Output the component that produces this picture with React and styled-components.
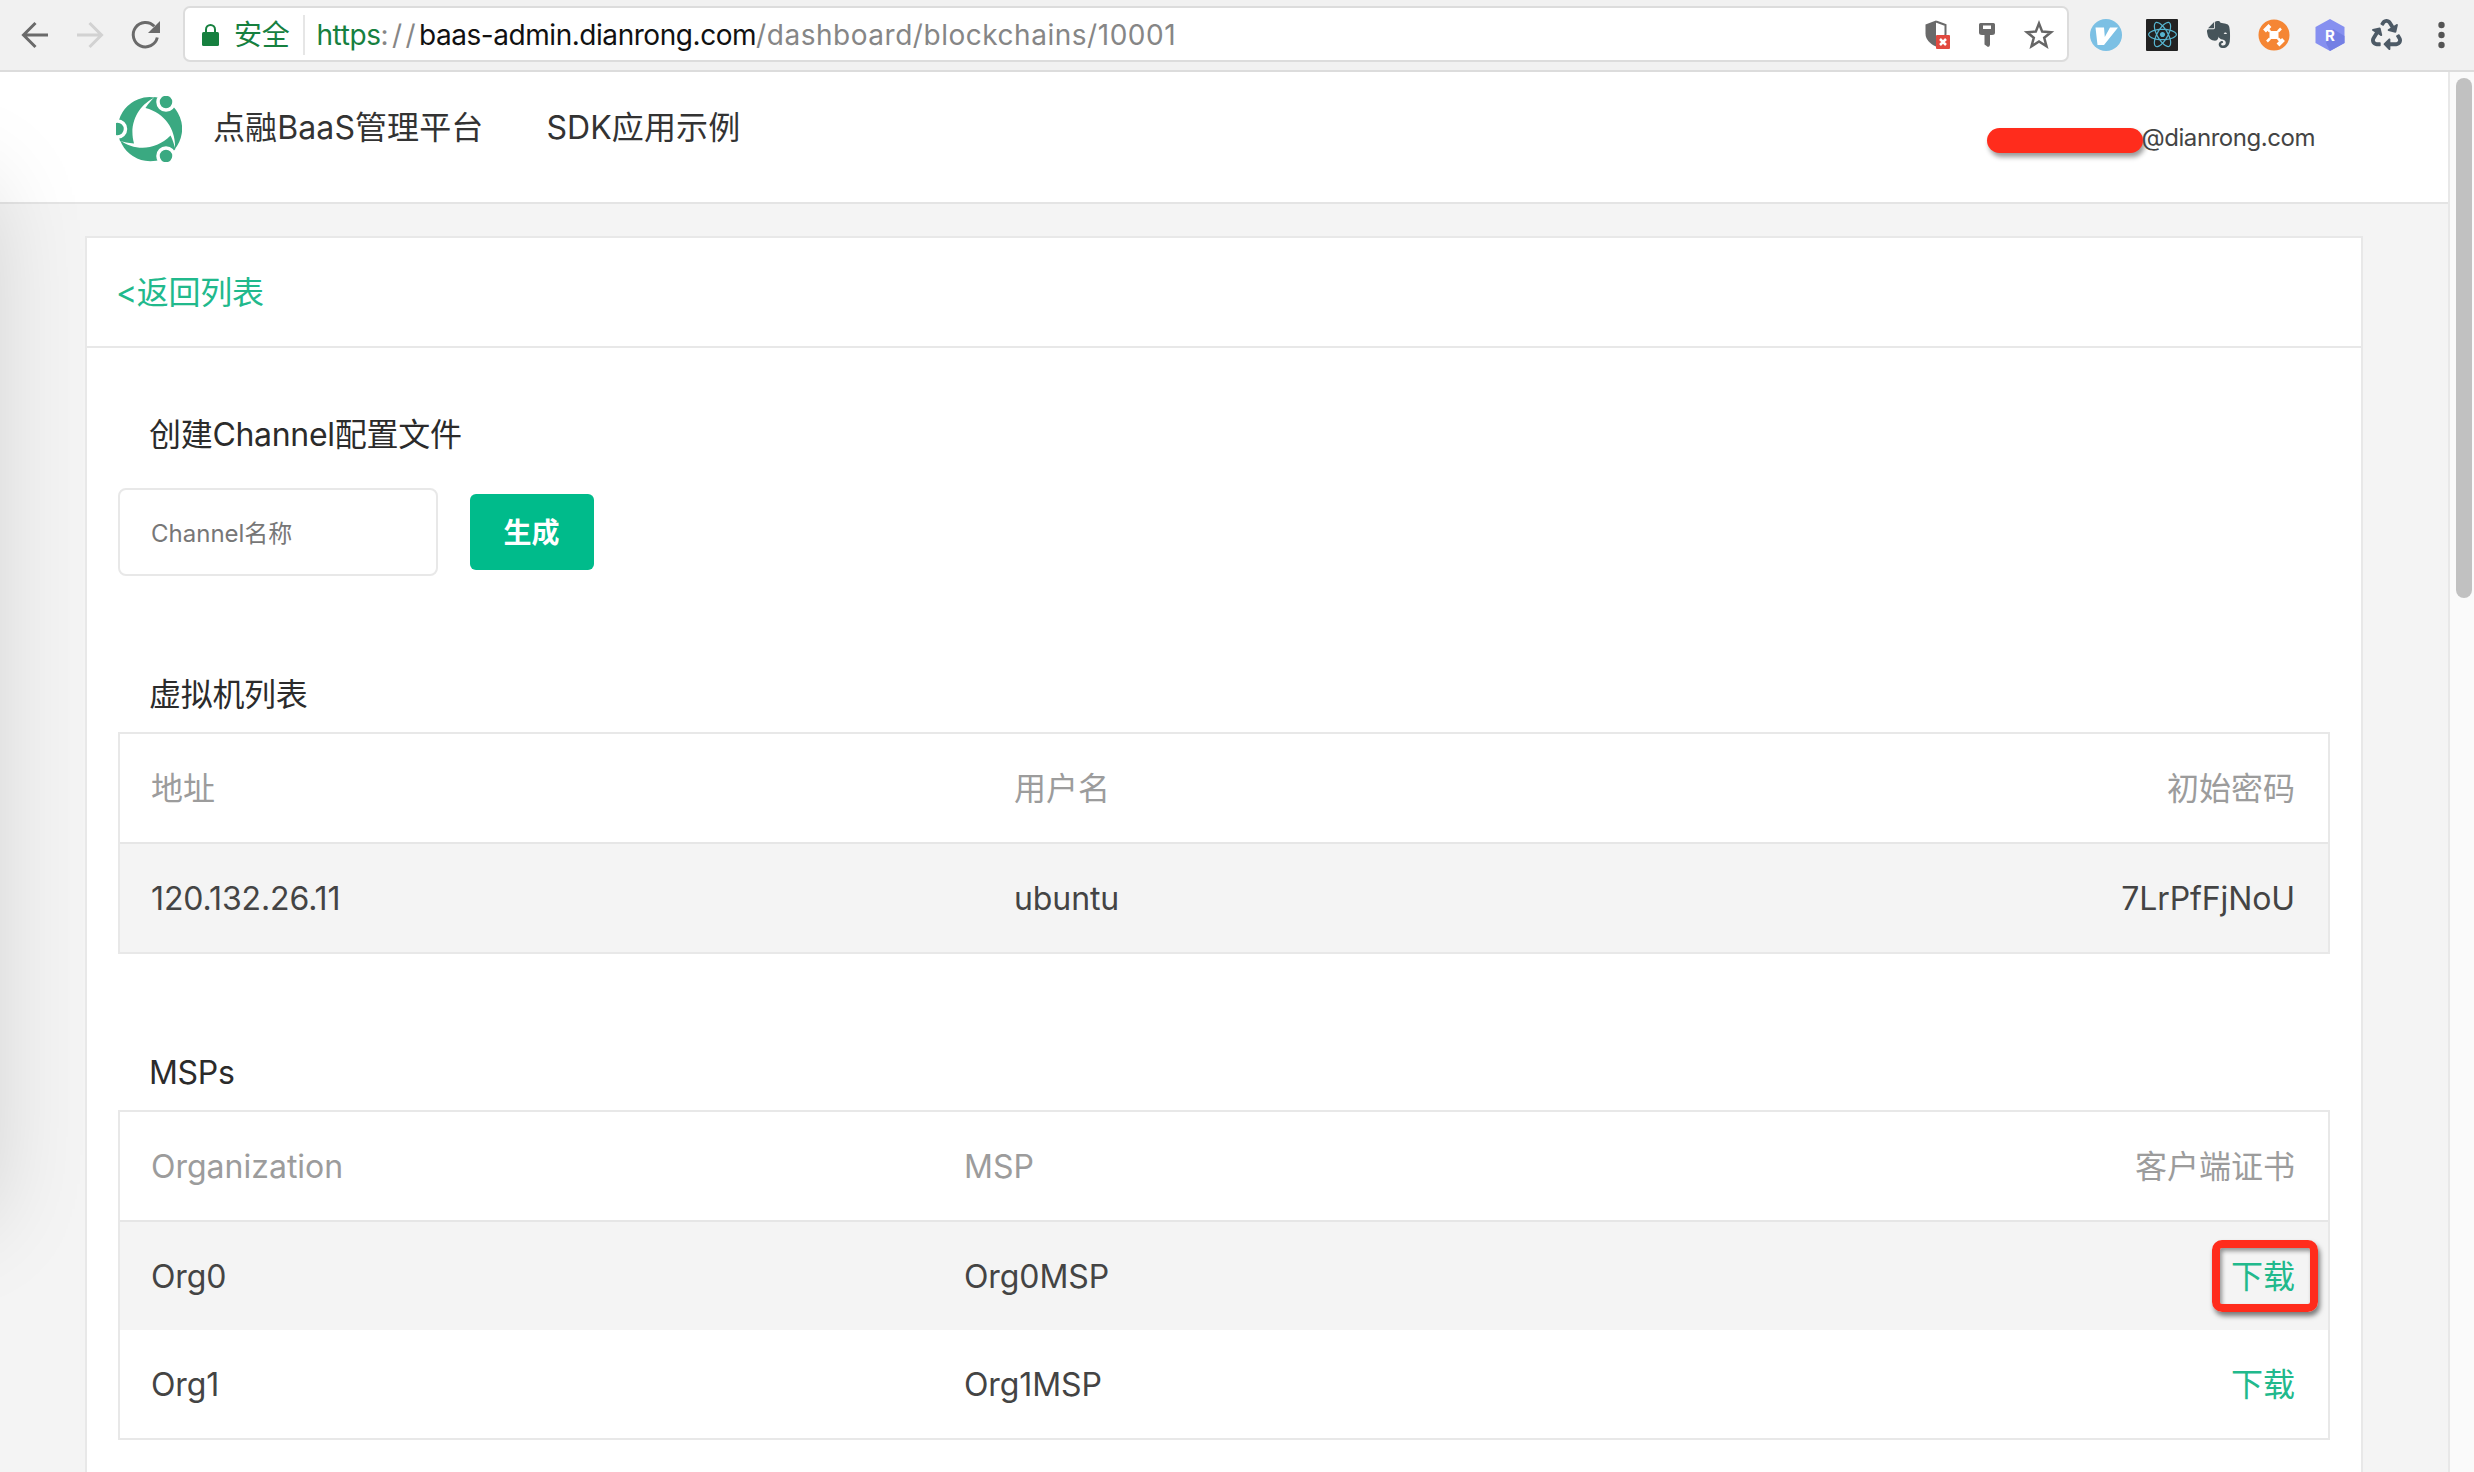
import React from "react";
import styled, { createGlobalStyle, css } from "styled-components";
import { FaEvernote, FaReact, FaRecycle } from "react-icons/fa";

const GREEN = "#00bb8b";
const LINK = "#21b98c";
const LINE = "#e8e8e8";
const RED = "#ff2c1c";

const GlobalStyle = createGlobalStyle`
  *, *::before, *::after { box-sizing: border-box; }
  body { margin: 0; background: #f4f4f4; }
  body, input, button {
    font-family: Inter, "Noto Sans CJK SC", sans-serif;
  }
`;

const Window = styled.div`
  height: 1472px;
  overflow: hidden;
  display: flex;
  flex-direction: column;
  color: #444;
  font-size: 32px;
  line-height: 40px;
  letter-spacing: -0.1px;
`;

/* ---------- browser toolbar ---------- */

const Toolbar = styled.div`
  flex: none;
  height: 72px;
  padding: 6px 16px 0 20px;
  display: flex;
  background: #f1f1f1;
  border-bottom: 2px solid #dcdcdc;
`;

const NavButtons = styled.div`
  width: 163px;
  height: 57px;
  display: flex;
  align-items: center;
  gap: 25px;
`;

const AddressBar = styled.div`
  width: 1886px;
  height: 56px;
  padding: 1px 12px 0 17px;
  display: flex;
  align-items: center;
  background: #fff;
  border: 2px solid #dcdcdc;
  border-radius: 7px;
  font-size: 28px;
  letter-spacing: 0;
`;

const Secure = styled.span`
  margin-left: 15px;
  padding-right: 14px;
  color: #16803f;
  letter-spacing: -0.3px;
  border-right: 2px solid #e6e6e6;
`;

const Url = styled.div`
  flex: 1;
  padding: 1px 0 0 11px;
  white-space: pre;
`;

const urlColors = { scheme: "#16803f", host: "#111", rest: "#868686" };

const UrlPart = styled.span`
  color: ${(p) => urlColors[p.$kind]};
  letter-spacing: ${(p) => p.$spacing}px;
`;

const PageActions = styled.div`
  display: flex;
  align-items: center;
  gap: 26px;
`;

const Extensions = styled.div`
  height: 57px;
  margin-left: 21px;
  display: flex;
  align-items: center;
  gap: 24px;
`;

const Tile = styled.span`
  width: 32px;
  height: 32px;
  display: flex;
  align-items: center;
  justify-content: center;
  color: ${(p) => p.$color};
  background: ${(p) => p.$bg || "transparent"};
  border-radius: 1px;
`;

/* ---------- page ---------- */

const Viewport = styled.div`
  flex: 1;
  min-height: 0;
  display: flex;
`;

const Page = styled.div`
  flex: 1;
  min-width: 0;
  position: relative;
  overflow: hidden;
`;

const DrawerShadow = styled.div`
  position: absolute;
  top: 115px;
  left: -220px;
  width: 206px;
  height: 1030px;
  box-shadow: 0 0 100px rgba(0, 0, 0, 0.17);
  pointer-events: none;
`;

const ScrollTrack = styled.div`
  width: 26px;
  padding: 6px 2px 0 6px;
  background: #fafafa;
  border-left: 2px solid ${LINE};
`;

const ScrollThumb = styled.div`
  width: 16px;
  height: 520px;
  border-radius: 8px;
  background: #c1c1c1;
`;

const Header = styled.header`
  height: 132px;
  padding: 24px 133px 0 116px;
  display: flex;
  align-items: flex-start;
  background: #fff;
  border-bottom: 2px solid #e4e4e4;
`;

const Nav = styled.nav`
  flex: 1;
  margin: 12px 0 0 31px;
  display: flex;
  gap: 63px;
`;

const NavItem = styled.a`
  color: #333;
  letter-spacing: 0.1px;
`;

const Account = styled.div`
  margin-top: 22px;
  display: flex;
  font-size: 24px;
  letter-spacing: -0.45px;
`;

const Redaction = styled.span`
  width: 156px;
  height: 25px;
  margin: 10px -1px 0 0;
  border-radius: 13px;
  background: ${RED};
  box-shadow: 2px 4px 5px rgba(0, 0, 0, 0.4);
`;

const Card = styled.main`
  position: relative;
  z-index: 1;
  width: 2278px;
  height: 1400px;
  margin: 32px 0 0 85px;
  background: #fff;
  border: 2px solid ${LINE};
`;

const CardHeader = styled.div`
  height: 110px;
  padding: 2px 0 0 29px;
  display: flex;
  align-items: center;
  border-bottom: 2px solid ${LINE};
`;

const CardBody = styled.div`
  padding: 67px 31px 0;
  display: flex;
  flex-direction: column;
  gap: 99px;
`;

const Link = styled.a`
  color: ${LINK};
  position: relative;
  letter-spacing: ${(p) => (p.$tight ? "-0.3px" : "0")};
  ${(p) =>
    p.$marked &&
    css`
      &::after {
        content: "";
        position: absolute;
        inset: -17px -23px -15px -19px;
        border: 8px solid ${RED};
        border-radius: 10px;
        box-shadow: 2px 4px 5px rgba(0, 0, 0, 0.5),
          inset 2px 3px 4px rgba(0, 0, 0, 0.4);
      }
    `}
`;

const Heading = styled.h2`
  margin: 0 0 ${(p) => p.$gap}px;
  padding-left: 31px;
  font-size: 32px;
  line-height: 40px;
  font-weight: 400;
  color: #2b2b2b;
  letter-spacing: -0.3px;
`;

const Form = styled.div`
  display: flex;
  align-items: center;
  gap: 32px;
`;

const TextInput = styled.input`
  width: 320px;
  height: 88px;
  padding: 2px 30px 0 31px;
  border: 2px solid #e8e8e8;
  border-radius: 8px;
  background: #fff;
  font-size: 24px;
  outline: none;
  &::placeholder { color: #777; opacity: 1; }
`;

const Button = styled.button`
  width: 124px;
  height: 76px;
  padding: 0 1px 2px 0;
  border: 0;
  border-radius: 6px;
  background: ${GREEN};
  color: #fff;
  font-size: 28px;
  font-weight: 700;
`;

const Table = styled.div`
  border: 2px solid ${LINE};
`;

const Row = styled.div`
  height: 108px;
  padding: 2px 33px 0 31px;
  display: grid;
  grid-template-columns: ${(p) => p.$first}px 1fr auto;
  align-items: center;
  background: ${(p) => (p.$striped ? "#f4f4f4" : "#fff")};
  ${(p) =>
    p.$head &&
    css`
      height: 110px;
      color: #9c9c9c;
      letter-spacing: 0;
      border-bottom: 2px solid #e6e6e6;
    `}
`;

/* ---------- drawings ---------- */

const Logo = () => (
  <svg width="66" height="66" viewBox="0 0 66 66">
    {[0, 120, 240].map((a) => (
      <g key={a} transform={`rotate(${a} 34 33)`}>
        <path
          fill="#3aa981"
          d="M4 45 A32 32 0 0 1 39 1.5 C24 8 12 26 18 47.5 C12 47 8 46 4 45Z"
        />
      </g>
    ))}
    {[[50, 6], [50, 60], [1.5, 33]].map(([x, y]) => (
      <circle key={y} cx={x} cy={y} r="8" fill="#3aa981" stroke="#fff" strokeWidth="3.5" />
    ))}
  </svg>
);

const Arrow = ({ color, flip }) => (
  <svg width="30" height="30" viewBox="0 0 30 30" fill="none" stroke={color} strokeWidth="3">
    <path transform={flip ? "matrix(-1 0 0 1 30 0)" : undefined} d="M28 15H4M15.500 3 3.500 15l12 12" />
  </svg>
);

const Reload = () => (
  <svg width="32" height="32" viewBox="0 0 32 32">
    <path d="M27.300 18.500A12.200 12.200 0 1 1 24.300 7.300" fill="none" stroke="#6a6a6a" strokeWidth="3" />
    <path d="M30 2v12H18z" fill="#6a6a6a" />
  </svg>
);

const Lock = () => (
  <svg width="17" height="24" viewBox="0 0 17 24">
    <path d="M4 10V6.500a4.500 4.500 0 0 1 9 0V10" fill="none" stroke="#16803f" strokeWidth="2" />
    <rect y="9" width="17" height="14" rx="1.500" fill="#16803f" />
  </svg>
);

const Shield = () => (
  <svg width="27" height="32" viewBox="0 0 27 32">
    <path d="M12 1.500 1.500 5.500v9c0 6 4.500 10.500 10.500 13z" fill="#6a6a6a" />
    <path d="M12 2.500 21.500 6v9c0 5.500-4 9.500-9.500 12" fill="#fff" stroke="#6a6a6a" strokeWidth="2" />
    <rect x="12" y="16" width="14" height="14" rx="1" fill="#e2493f" />
    <path d="m16 20 6 6m0-6-6 6" stroke="#fff" strokeWidth="2.500" />
  </svg>
);

const Key = () => (
  <svg width="20" height="28" viewBox="0 0 20 28">
    <path fillRule="evenodd" fill="#6a6a6a" d="M3.500 2h13q1.500 0 1.500 1.500v8q0 2.500-3 2.500h-2v9.500q0 2-2 2.500l-3.500-2.500V14H5q-3 0-3-2.500v-8Q2 2 3.500 2zM6 4.500v3.500h8V4.500z" />
  </svg>
);

const Star = () => (
  <svg width="32" height="32" viewBox="0 0 32 32">
    <path
      d="M16 4.500l3.200 8.100 8.800.6-6.800 5.500 2.300 8.600L16 22.500l-7.500 4.800 2.300-8.600L4 13.200l8.800-.6z"
      fill="#fff"
      stroke="#666"
      strokeWidth="2.500"
    />
  </svg>
);

const Vimium = () => (
  <svg width="32" height="32" viewBox="0 0 32 32">
    <circle cx="16" cy="16" r="16" fill="#7cc0e4" />
    <path d="M5.500 8.500h8.500l.8 9.500L20 8.500h8L14 26H7.500z" fill="#fff" />
  </svg>
);

const Wrench = () => (
  <svg width="32" height="32" viewBox="0 0 32 32">
    <circle cx="16" cy="16" r="15.500" fill="#f58634" />
    <rect x="11.500" y="12" width="9" height="8" fill="#fff" />
    <path d="M12 12.500 9.500 10M20 12.500l3-3M12 19.500l-3 3M20 19.500l2.500 2.500" stroke="#fff" strokeWidth="2.500" />
    <path d="M6.500 12 12 6.500M20 26l5.500-5.500" stroke="#fff" strokeWidth="4" />
  </svg>
);

const Hexagon = () => (
  <svg width="32" height="34" viewBox="0 0 32 34">
    <path d="M16 1 30.500 9v16L16 33 1.500 25V9z" fill="#8690f0" />
    <path d="M19 11 30.500 18v7L16 33l-4-8z" fill="#747fe4" />
    <text x="16" y="22.500" textAnchor="middle" fontFamily="Inter, sans-serif" fontWeight="700" fontSize="15" letterSpacing="0" fill="#fff">R</text>
  </svg>
);

const Dots = () => (
  <svg width="32" height="32" viewBox="0 0 32 32" fill="#555">
    <circle cx="15.500" cy="6" r="3.200" />
    <circle cx="15.500" cy="16" r="3.200" />
    <circle cx="15.500" cy="26" r="3.200" />
  </svg>
);

/* ---------- data ---------- */

const MACHINES = [{ cells: ["120.132.26.11", "ubuntu", "7LrPfFjNoU"] }];
const MSPS = [
  { cells: ["Org0", "Org0MSP"], marked: true },
  { cells: ["Org1", "Org1MSP"] },
];

function DataTable({ head, rows, first }) {
  return (
    <Table>
      <Row $head $first={first}>
        {head.map((h) => <span key={h}>{h}</span>)}
      </Row>
      {rows.map((row, i) => (
        <Row key={row.cells[0]} $first={first} $striped={i % 2 === 0}>
          {row.cells.map((c) => <span key={c}>{c}</span>)}
          {row.cells.length < 3 && <Link $marked={row.marked}>下载</Link>}
        </Row>
      ))}
    </Table>
  );
}

export default function App() {
  return (
    <Window>
      <GlobalStyle />
      <Toolbar>
        <NavButtons>
          <Arrow color="#6a6a6a" />
          <Arrow color="#d2d2d2" flip />
          <Reload />
        </NavButtons>
        <AddressBar>
          <Lock />
          <Secure>安全</Secure>
          <Url>
            <UrlPart $kind="scheme" $spacing={-0.4}>https</UrlPart>
            <UrlPart $kind="rest" $spacing={3.4}>://</UrlPart>
            <UrlPart $kind="host" $spacing={-0.45}>baas-admin.dianrong.com</UrlPart>
            <UrlPart $kind="rest" $spacing={0.53}>/dashboard/blockchains/10001</UrlPart>
          </Url>
          <PageActions>
            <Shield />
            <Key />
            <Star />
          </PageActions>
        </AddressBar>
        <Extensions>
          <Tile><Vimium /></Tile>
          <Tile $bg="#222" $color="#56b4cf"><FaReact size={29} /></Tile>
          <Tile $color="#46545a"><FaEvernote size={31} /></Tile>
          <Tile><Wrench /></Tile>
          <Tile><Hexagon /></Tile>
          <Tile $color="#4d5a66"><FaRecycle size={31} /></Tile>
          <Tile><Dots /></Tile>
        </Extensions>
      </Toolbar>
      <Viewport>
        <Page>
          <Header>
            <Logo />
            <Nav>
              <NavItem>点融BaaS管理平台</NavItem>
              <NavItem>SDK应用示例</NavItem>
            </Nav>
            <Account>
              <Redaction />
              @dianrong.com
            </Account>
          </Header>
          <DrawerShadow />
          <Card>
            <CardHeader>
              <Link $tight>&lt;返回列表</Link>
            </CardHeader>
            <CardBody>
              <section>
                <Heading $gap={33}>创建Channel配置文件</Heading>
                <Form>
                  <TextInput placeholder="Channel名称" />
                  <Button>生成</Button>
                </Form>
              </section>
              <section>
                <Heading $gap={17}>虚拟机列表</Heading>
                <DataTable first={863} head={["地址", "用户名", "初始密码"]} rows={MACHINES} />
              </section>
              <section>
                <Heading $gap={17}>MSPs</Heading>
                <DataTable first={813} head={["Organization", "MSP", "客户端证书"]} rows={MSPS} />
              </section>
            </CardBody>
          </Card>
        </Page>
        <ScrollTrack>
          <ScrollThumb />
        </ScrollTrack>
      </Viewport>
    </Window>
  );
}
